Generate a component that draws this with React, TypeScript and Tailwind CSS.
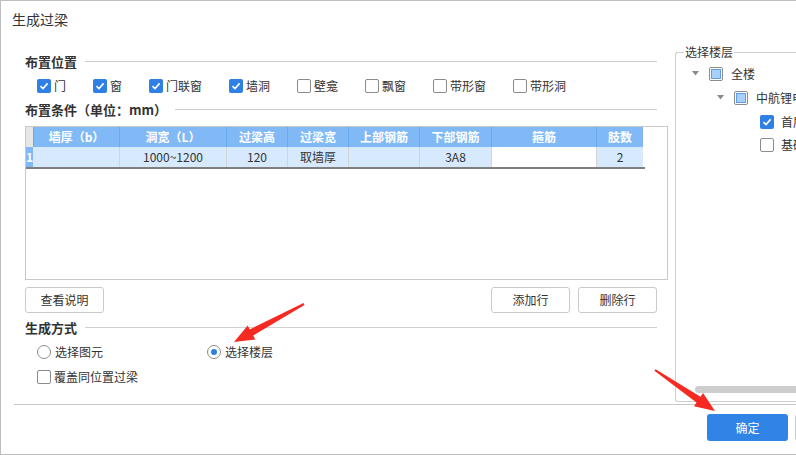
import React from "react";

const Check = ({ checked }: { checked?: boolean }) =>
  checked ? (
    <span className="flex h-[14px] w-[14px] shrink-0 items-center justify-center rounded-[2px] bg-[#2f80e4]">
      <svg width="10" height="10" viewBox="0 0 10 10">
        <path d="M1.5 5.2 L4 7.6 L8.6 2.4" fill="none" stroke="white" strokeWidth="1.6" />
      </svg>
    </span>
  ) : (
    <span className="h-[14px] w-[14px] shrink-0 rounded-[2px] border border-[#8c8c8c] bg-white" />
  );

const Partial = () => (
  <span className="flex h-[14px] w-[14px] shrink-0 items-center justify-center rounded-[2px] border border-[#8c8c8c] bg-white">
    <span className="h-[10px] w-[10px] border border-[#5c9ee8] bg-[#a9cffa]" />
  </span>
);

const Radio = ({ on }: { on?: boolean }) => (
  <span className="flex h-[14px] w-[14px] shrink-0 items-center justify-center rounded-full border border-[#8c8c8c] bg-white">
    {on && <span className="h-[6px] w-[6px] rounded-full bg-[#2f80e4]" />}
  </span>
);

const Tri = () => (
  <svg width="7" height="5" viewBox="0 0 7 5" className="shrink-0">
    <path d="M0 0 L7 0 L3.5 4.5 Z" fill="#8a8a8a" />
  </svg>
);

const Section = ({ title }: { title: string }) => (
  <div className="flex h-[18px] items-center pr-[11px]">
    <span className="font-bold text-[13px] text-[#333]">{title}</span>
    <span className="ml-[8px] h-px flex-1 bg-[#cfcfcf]" />
  </div>
);

const Btn = ({ label }: { label: string }) => (
  <div className="flex h-[26px] w-[79px] items-center justify-center rounded-[3px] border border-[#cacaca] bg-white text-[12px] text-[#333]">
    {label}
  </div>
);

const headers = ["", "墙厚（b）", "洞宽（L）", "过梁高", "过梁宽", "上部钢筋", "下部钢筋", "箍筋", "肢数"];
const row = ["1", "", "1000~1200", "120", "取墙厚", "", "3A8", "", "2"];

export default function App() {
  const cb: [string, boolean, string][] = [
    ["门", true, "w-[56px]"],
    ["窗", true, "w-[56px]"],
    ["门联窗", true, "w-[80px]"],
    ["墙洞", true, "w-[68px]"],
    ["壁龛", false, "w-[68px]"],
    ["飘窗", false, "w-[68px]"],
    ["带形窗", false, "w-[80px]"],
    ["带形洞", false, "w-[80px]"],
  ];
  return (
    <div
      className="relative flex h-[455px] w-[796px] flex-col overflow-hidden border-y border-l border-[#bdbdbd] bg-white text-[12px] text-[#333]"
      style={{ fontFamily: '"Noto Sans CJK SC", "Microsoft YaHei", sans-serif' }}
    >
      <div className="h-[37px] pl-[11px] pt-[8px] text-[14px] leading-[20px]">生成过梁</div>
      <div className="flex h-[367px] pl-[13px]">
        {/* left column */}
        <div className="flex w-[654px] flex-col pl-[11px] pt-[15px]">
          <Section title="布置位置" />
          <div className="mt-[6px] flex h-[18px] items-center pl-[12px]">
            {cb.map(([l, c, w]) => (
              <div key={l} className={`flex items-center gap-[3px] ${w}`}>
                <Check checked={c} />
                <span>{l}</span>
              </div>
            ))}
          </div>
          <div className="mt-[6px]">
            <Section title="布置条件（单位：mm）" />
          </div>
          <div className="mt-[7px] h-[154px] w-[643px] border border-[#c9c9c9] bg-white">
            <div className="w-[619px]">
              <div className="grid grid-cols-[7px_86px_107px_61px_61px_71px_72px_105px_47px]">
                {headers.map((h, i) => (
                  <div
                    key={i}
                    className={`flex h-[20px] items-center justify-center overflow-hidden whitespace-nowrap text-[12px] font-bold text-white ${
                      i === 0 ? "bg-[#e6e6e6]" : "border-l border-[#69a9ee] bg-[#80b9f6]"
                    }`}
                  >
                    {h}
                  </div>
                ))}
                {row.map((c, i) => (
                  <div
                    key={i}
                    className={`flex h-[20px] items-center justify-center overflow-hidden whitespace-nowrap text-[12px] ${
                      i === 0
                        ? "bg-[#80b9f6] font-bold text-white"
                        : i === 7
                        ? "border-l border-[#d4d4d4] bg-white"
                        : i === 1
                        ? "bg-[#d6e9fd]"
                        : "border-l border-[#d4d4d4] bg-[#d6e9fd]"
                    }`}
                  >
                    {c}
                  </div>
                ))}
              </div>
              <div className="h-[2px] w-[619px] bg-[#7f7f7f]" />
            </div>
          </div>
          <div className="mt-[7px] flex h-[26px] items-center pr-[11px]">
            <Btn label="查看说明" />
            <div className="flex-1" />
            <Btn label="添加行" />
            <div className="ml-[8px]">
              <Btn label="删除行" />
            </div>
          </div>
          <div className="mt-[6px]">
            <Section title="生成方式" />
          </div>
          <div className="mt-[6px] flex h-[18px] items-center pl-[12px]">
            <div className="flex w-[170px] items-center gap-[4px]">
              <Radio />
              <span>选择图元</span>
            </div>
            <div className="flex items-center gap-[4px]">
              <Radio on />
              <span>选择楼层</span>
            </div>
          </div>
          <div className="mt-[7px] flex h-[18px] items-center gap-[3px] pl-[12px]">
            <Check />
            <span>覆盖同位置过梁</span>
          </div>
        </div>
        {/* right panel */}
        <div className="relative ml-[7px] mt-[14px] h-[350px] flex-1 overflow-visible rounded-l-[3px] border-y border-l border-[#cfcfcf]">
          <span className="absolute -top-[9px] left-[8px] bg-white px-[1px] leading-[16px]">选择楼层</span>
          <div className="flex flex-col overflow-hidden whitespace-nowrap pt-[12px]">
            <div className="flex h-[18px] items-center pl-[16px]">
              <Tri />
              <span className="ml-[10px]"><Partial /></span>
              <span className="ml-[8px]">全楼</span>
            </div>
            <div className="mt-[6px] flex h-[18px] items-center pl-[41px]">
              <Tri />
              <span className="ml-[10px]"><Partial /></span>
              <span className="ml-[8px]">中航锂电池项目</span>
            </div>
            <div className="mt-[6px] flex h-[18px] items-center gap-[7px] pl-[84px]">
              <Check checked />
              <span>首层</span>
            </div>
            <div className="mt-[5px] flex h-[18px] items-center gap-[7px] pl-[84px]">
              <Check />
              <span>基础层</span>
            </div>
          </div>
          <div className="absolute bottom-[8px] left-[19px] right-0 h-[7px] rounded-l-[4px] bg-[#cdcdcd]" />
        </div>
      </div>
      <div className="ml-[13px] h-px bg-[#c9c9c9]" />
      <div className="flex h-[49px] items-start pl-[706px] pt-[9px]">
        <div className="flex h-[27px] w-[81px] shrink-0 items-center justify-center rounded-[3px] bg-[#2f84e6] text-[12px] text-white">
          确定
        </div>
        <div className="ml-[7px] h-[27px] w-[60px] shrink-0 rounded-[3px] border border-[#cacaca] bg-white" />
      </div>
      <svg className="pointer-events-none absolute left-0 top-0" width="796" height="455">
        <polygon
          points="303.5,303.9 302.5,302.1 248.8,328.4 246.7,324.5 233,341 254.3,338.5 252.2,334.6"
          fill="#f52a22"
        />
        <polygon
          points="653.4,369.8 654.6,368.2 699.5,395.8 702,392.1 714,410 693,405.3 695.5,401.6"
          fill="#f52a22"
        />
      </svg>
    </div>
  );
}
